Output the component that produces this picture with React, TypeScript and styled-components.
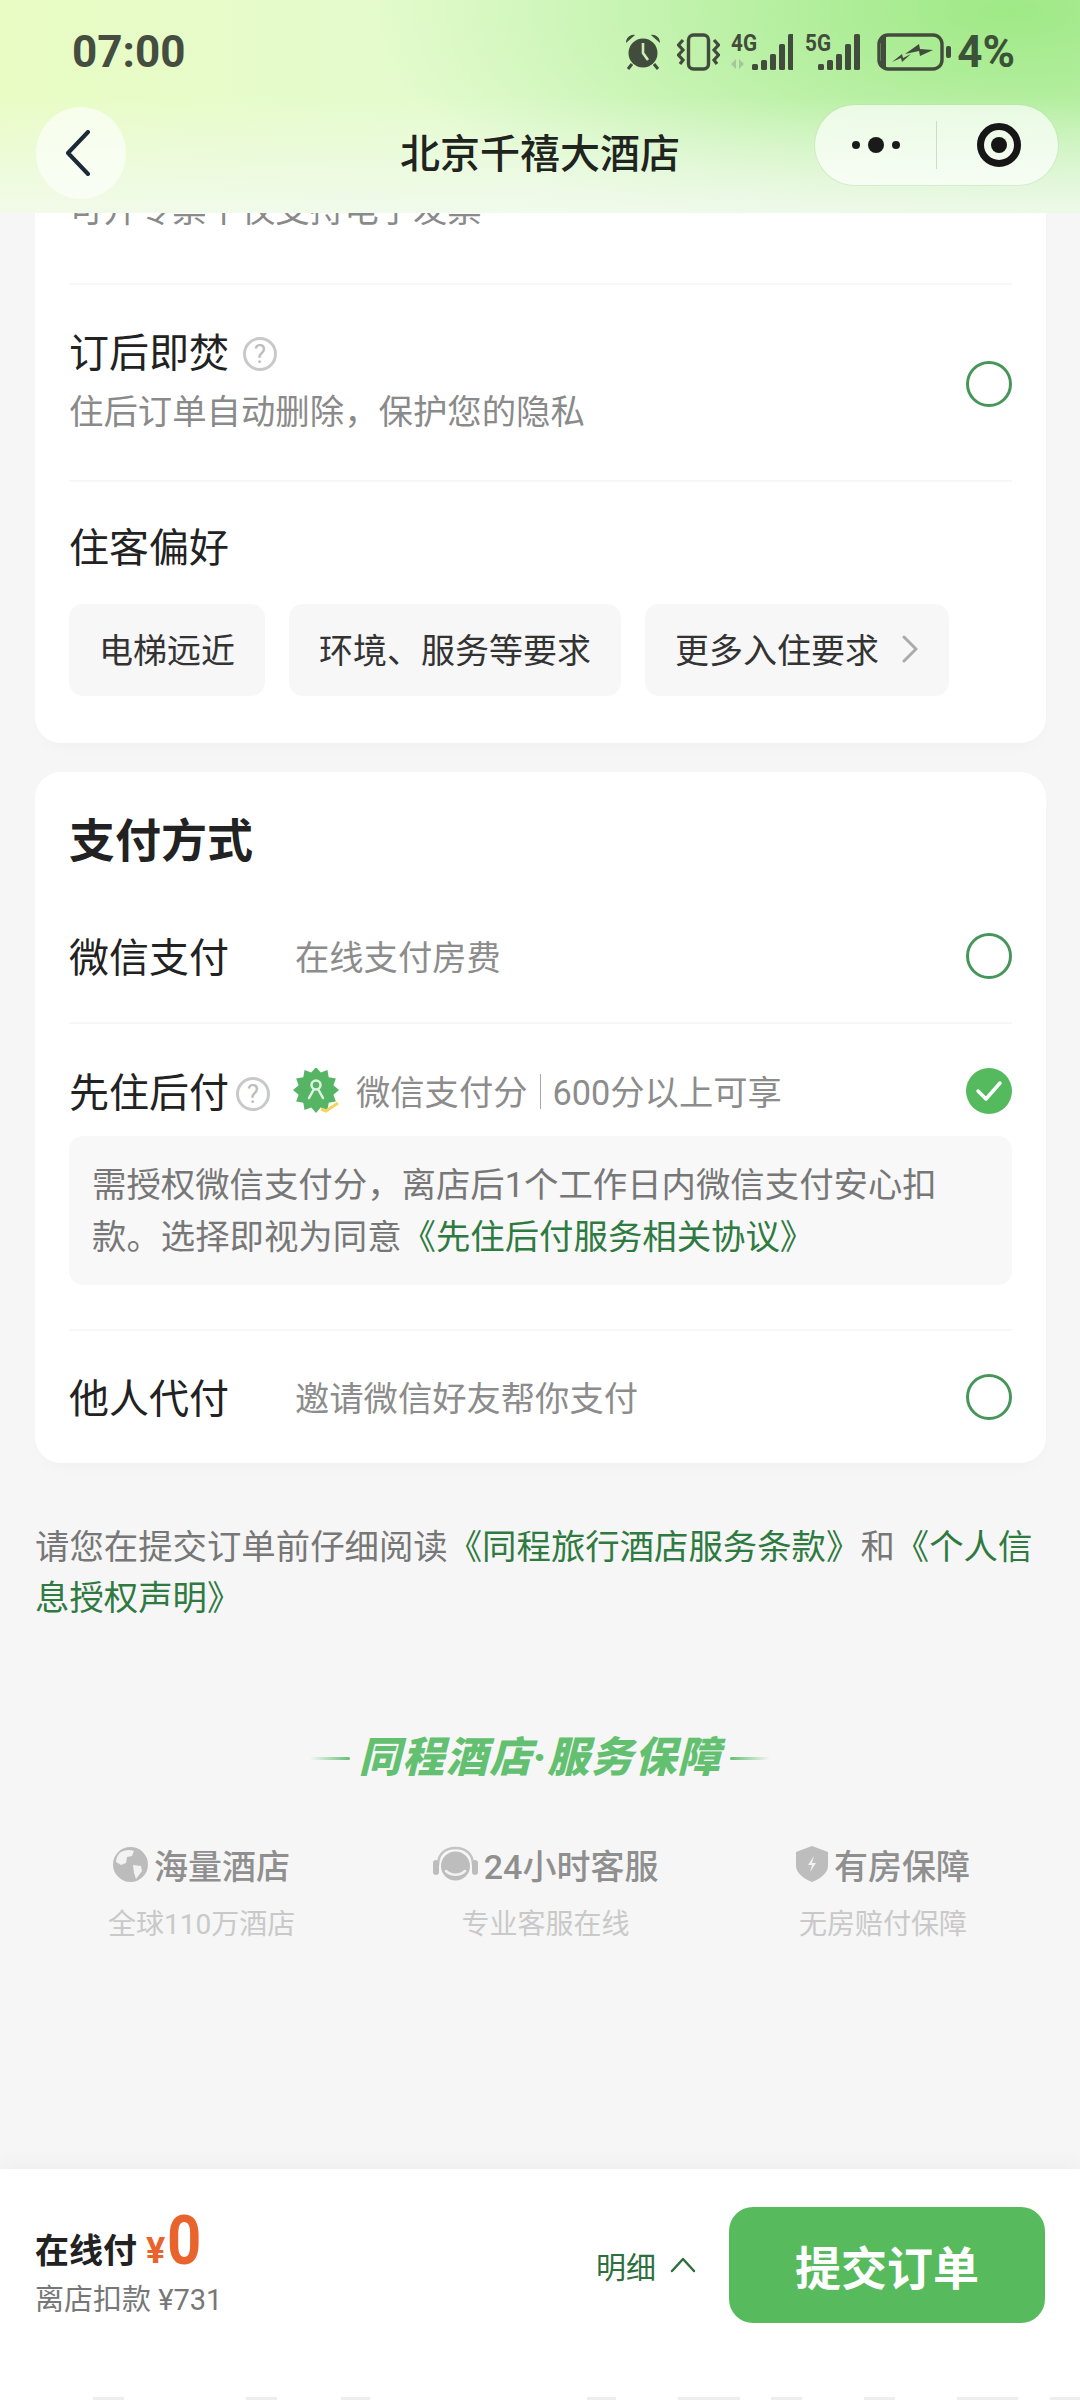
import React, { FC } from "react";
import styled, { createGlobalStyle } from "styled-components";

const GlobalStyle = createGlobalStyle`
    html, body {
        margin: 0;
        padding: 0;
        background: #f6f6f6;
    }
    * {
        box-sizing: border-box;
    }
    body {
        font-family: "Roboto", "Noto Sans CJK SC", sans-serif;
    }
`;

const Page = styled.div`
    width: 1080px;
    height: 2400px;
    display: flex;
    flex-direction: column;
    overflow: hidden;
    background: #f6f6f6;
`;

const Header = styled.header`
    height: 213px;
    flex-shrink: 0;
    position: relative;
    z-index: 2;
    background:
        linear-gradient(180deg, rgba(243, 250, 240, 0) 45%, rgba(243, 250, 240, 0.85) 100%),
        radial-gradient(ellipse 640px 260px at 1010px 10px, #9fe986 0%, rgba(159, 233, 134, 0) 100%),
        linear-gradient(90deg, #e9fcc4 0%, #e3fbd0 50%, #d8f8cc 100%);
`;

const StatusBar = styled.div`
    height: 105px;
    padding: 0 65px 1px 72px;
    display: flex;
    align-items: center;
    justify-content: space-between;
    color: #404c3b;
`;

const Clock = styled.div`
    font-size: 44px;
    font-weight: 700;
    color: #444d3f;
`;

const StatusIcons = styled.div`
    display: flex;
    align-items: center;
`;

const StatusGlyph = styled.svg<{ $ml?: number }>`
    display: block;
    margin-left: ${(p) => p.$ml ?? 0}px;
    flex-shrink: 0;
`;

// taller than the bars so the 4G / 5G label box stays inside the drawing
const SignalGlyph = styled(StatusGlyph)`
    margin-top: -10px;
`;

const Percent = styled.span`
    margin-left: 5px;
    font-size: 44px;
    font-weight: 700;
    line-height: 48px;
    color: #3c5238;
`;

const Nav = styled.div`
    height: 96px;
    padding: 0 22px 0 36px;
    display: grid;
    grid-template-columns: 1fr auto 1fr;
    align-items: start;
`;

const BackButton = styled.div`
    width: 90px;
    height: 92px;
    margin-top: 2px;
    padding-right: 6px;
    border-radius: 50%;
    background: rgba(255, 255, 255, 0.62);
    display: flex;
    align-items: center;
    justify-content: center;
`;

const NavTitle = styled.div`
    padding-top: 2px;
    font-size: 40px;
    font-weight: 500;
    line-height: 96px;
    color: #1f241e;
    transform: translateX(-7px);
`;

const Capsule = styled.div`
    justify-self: end;
    width: 243px;
    height: 80px;
    border-radius: 40px;
    background: rgba(255, 255, 255, 0.68);
    box-shadow: 0 0 0 1px rgba(190, 215, 180, 0.35);
    display: flex;
    align-items: center;
`;

const CapsuleSide = styled.div`
    flex: 1;
    height: 48px;
    display: flex;
    align-items: center;
    justify-content: center;
    & + & {
        border-left: 1px solid rgba(170, 190, 165, 0.5);
    }
`;

const Dot = styled.span<{ $big?: boolean }>`
    width: ${(p) => (p.$big ? 16 : 8)}px;
    height: ${(p) => (p.$big ? 16 : 8)}px;
    margin: 0 4px;
    border-radius: 50%;
    background: #1a1a1a;
`;

const Target = styled.span`
    width: 44px;
    height: 44px;
    margin-left: 2px;
    border: 7px solid #161616;
    border-radius: 50%;
    display: flex;
    align-items: center;
    justify-content: center;
    &::after {
        content: "";
        width: 16px;
        height: 16px;
        border-radius: 50%;
        background: #161616;
    }
`;

const Scroller = styled.main`
    flex: 1;
    min-height: 0;
    overflow: hidden;
`;

const ScrollContent = styled.div`
    margin-top: -36px;
`;

const Card = styled.section`
    margin: 0 34px 0 35px;
    padding: 0 34px;
    background: #fff;
    border-radius: 26px;
    box-shadow: 0 10px 16px -8px rgba(0, 0, 0, 0.03);
    & + & {
        margin-top: 29px;
    }
`;

const Row = styled.div`
    border-bottom: 2px solid #f7f7f7;
    &:last-child {
        border-bottom: none;
    }
`;

const CutRow = styled(Row)`
    height: 108px;
    padding-top: 7px;
    font-size: 34.4px;
    line-height: 52px;
    color: #8a8a8a;
`;

const SwitchRow = styled(Row)`
    height: 197px;
    padding-top: 40px;
    display: flex;
    justify-content: space-between;
`;

const PreferRow = styled(Row)`
    padding: 38px 0 47px;
`;

const PayRow = styled(Row)`
    height: 134px;
    display: flex;
    align-items: center;
    justify-content: space-between;
    &:last-child {
        height: 132px;
    }
`;

const ScoreRow = styled(Row)`
    padding: 44px 0 44px;
`;

const RowTitle = styled.div`
    padding-top: 3px;
    margin-bottom: -3px;
    font-size: 40px;
    line-height: 52px;
    color: #222;
    display: flex;
    align-items: center;
`;

const RowSub = styled.div`
    margin-top: 9px;
    font-size: 34.4px;
    line-height: 52px;
    color: #8a8a8a;
`;

const Radio = styled.span<{ $top?: number }>`
    width: 46px;
    height: 46px;
    flex-shrink: 0;
    margin-top: ${(p) => p.$top ?? 0}px;
    border: 3px solid #46965a;
    border-radius: 50%;
`;

const CheckedRadio = styled.span`
    width: 46px;
    height: 46px;
    flex-shrink: 0;
    border-radius: 50%;
    background: #55b95d;
    display: flex;
    align-items: center;
    justify-content: center;
`;

const Help = styled.span<{ $ml: number }>`
    width: 34px;
    height: 34px;
    flex-shrink: 0;
    margin-left: ${(p) => p.$ml}px;
    border: 3px solid #c9c9c9;
    border-radius: 50%;
    font-size: 26px;
    line-height: 28px;
    text-align: center;
    color: #bcbcbc;
`;

const Chips = styled.div`
    margin-top: 32px;
    display: flex;
    gap: 24px;
`;

const Chip = styled.div`
    height: 92px;
    padding: 0 30px 3px;
    border-radius: 14px;
    background: #f7f7f7;
    font-size: 34px;
    color: #333;
    display: flex;
    align-items: center;
    gap: 22px;
`;

const CardTitle = styled.h2`
    margin: 0;
    padding: 39px 0 19px;
    font-size: 46px;
    font-weight: 700;
    line-height: 60px;
    color: #222;
`;

const PayLabel = styled.div`
    display: flex;
    align-items: center;
`;

const PayName = styled(RowTitle)`
    width: 226px;
`;

const PayHint = styled.span`
    padding-top: 3px;
    font-size: 34.3px;
    line-height: 52px;
    color: #8c8c8c;
`;

const ScoreHead = styled.div`
    height: 46px;
    display: flex;
    align-items: center;
    justify-content: space-between;
`;

const ScoreLabel = styled.div`
    display: flex;
    align-items: center;
`;

const ScoreBadge = styled.svg`
    display: block;
    margin: 0 15px 0 23px;
`;

const ScorePipe = styled.span`
    width: 1px;
    height: 35px;
    margin: 0 12px;
    background: #a8a8a8;
`;

const NoteBox = styled.div`
    margin-top: 22px;
    padding: 23px 23px 22px;
    border-radius: 14px;
    background: #f8f8f8;
    font-size: 34.4px;
    line-height: 52px;
    color: #777;
`;

const GreenLink = styled.span`
    color: #2f7a40;
`;

const Terms = styled.p`
    margin: 59px 35px 0;
    font-size: 34.4px;
    line-height: 51px;
    color: #777;
`;

const Promise = styled.div`
    margin-top: 104px;
    display: flex;
    align-items: center;
    justify-content: center;
    gap: 9px;
`;

const PromiseLine = styled.span<{ $flip?: boolean }>`
    width: 40px;
    height: 3px;
    border-radius: 2px;
    background: linear-gradient(${(p) => (p.$flip ? "270deg" : "90deg")}, rgba(98, 192, 112, 0), #62c070);
`;

const PromiseTitle = styled.div`
    font-size: 42px;
    font-weight: 900;
    font-style: italic;
    line-height: 60px;
    letter-spacing: 1.5px;
    color: #62c070;
`;

const Perks = styled.div`
    margin-top: 54px;
    padding: 0 110px 0 108px;
    display: flex;
    justify-content: space-between;
`;

const Perk = styled.div`
    display: flex;
    flex-direction: column;
    align-items: center;
`;

const PerkHead = styled.div`
    height: 44px;
    display: flex;
    align-items: center;
    gap: 6px;
    font-size: 34px;
    font-weight: 500;
    color: #8f8f8f;
`;

const PerkSub = styled.div`
    margin-top: 19px;
    font-size: 28px;
    line-height: 40px;
    color: #c9c9c9;
`;

const Footer = styled.footer`
    height: 231px;
    flex-shrink: 0;
    position: relative;
    z-index: 1;
    padding: 38px 35px 0;
    background: #fff;
    box-shadow: 0 -6px 18px rgba(0, 0, 0, 0.035);
    display: flex;
    align-items: flex-start;
`;

const PriceBlock = styled.div`
    flex: 1;
`;

const PriceLine = styled.div`
    height: 66px;
    display: flex;
    align-items: flex-end;
    color: #222;
    font-size: 34px;
    font-weight: 700;
    line-height: 44px;
`;

const Yen = styled.span`
    margin: 0 2px 0 9px;
    font-size: 36px;
    line-height: 44px;
    color: #e8642c;
`;

const Amount = styled.span`
    display: inline-block;
    margin-bottom: -1px;
    font-size: 68px;
    line-height: 66px;
    color: #e8642c;
    transform: scaleX(0.88);
    transform-origin: left center;
`;

const PriceSub = styled.div`
    margin-top: 7px;
    font-size: 29px;
    line-height: 40px;
    color: #777;
`;

const Detail = styled.div`
    height: 116px;
    margin-right: 33px;
    display: flex;
    align-items: center;
    gap: 14px;
    font-size: 30px;
    color: #2f6f3d;
`;

const SubmitButton = styled.button`
    width: 316px;
    height: 116px;
    border: none;
    border-radius: 24px;
    background: #57bb5e;
    color: #fff;
    font-family: inherit;
    font-size: 46px;
    font-weight: 700;
`;

const ClippedMarks = styled.svg`
    position: absolute;
    left: 0;
    bottom: 0;
    display: block;
`;

// 12 pointed badge behind the WeChat score icon
const badgePoints = Array.from({ length: 24 }, (_, i) => {
    const r = i % 2 === 0 ? 23 : 18;
    const a = (i * Math.PI) / 12 - Math.PI / 2;
    return `${(23 + r * Math.cos(a)).toFixed(1)},${(22 + r * Math.sin(a)).toFixed(1)}`;
}).join(" ");

const marks: [number, number][] = [
    [93, 31], [246, 31], [341, 29], [587, 29], [678, 62], [771, 31], [864, 31], [957, 61], [1050, 30],
];

const ink = "#424c3d";

const AlarmIcon = () => (
    <StatusGlyph width="38" height="38" viewBox="0 0 38 38">
        <circle cx="19" cy="20" r="14.5" fill={ink} />
        <path d="M19 10v10l5 7" fill="none" stroke="#cdeeb8" strokeWidth="2.6" />
        <path d="M2 10c0-5 4-9 9-8zM36 10c0-5-4-9-9-8z" fill={ink} />
        <path d="M8 31l-4 5M30 31l4 5" stroke={ink} strokeWidth="3" />
    </StatusGlyph>
);

const VibrateIcon = () => (
    <StatusGlyph $ml={15} width="43" height="38" viewBox="0 0 43 38">
        <rect x="11.5" y="2" width="20" height="34" rx="5" fill="none" stroke={ink} strokeWidth="3.4" />
        <path d="M6 7L1.5 12 6 17 1.5 22 6 27 3 31M37 7l4.500 5L37 17l4.500 5L37 27l3 4" fill="none" stroke={ink} strokeWidth="3.2" />
    </StatusGlyph>
);

const barTops = [30, 26, 20, 10, 0];

const SignalIcon: FC<{ label: string; barStart: number; width: number; ml: number; arrows?: boolean }> = ({
    label,
    barStart,
    width,
    ml,
    arrows,
}) => (
    <SignalGlyph $ml={ml} width={width} height="48" viewBox={`0 -10 ${width} 48`}>
        <text x="0" y="18" fontSize="24" fontWeight="700" fontFamily="Roboto" textLength="26" lengthAdjust="spacingAndGlyphs" fill={ink}>
            {label}
        </text>
        {arrows && <path d="M0 31l5-5v10zM8 36v-10l5 5z" fill="#a9c5a0" />}
        {barTops.map((top, i) => (
            <rect key={i} x={barStart + i * 9} y={top + 1} width="6" height={36 - top} rx="1.500" fill={ink} />
        ))}
    </SignalGlyph>
);

const BatteryIcon = () => (
    <StatusGlyph $ml={16} width="75" height="38" viewBox="0 0 75 38">
        <rect x="2" y="2" width="63" height="34" rx="9" fill="none" stroke={ink} strokeWidth="3.4" />
        <path d="M6.500 4v30" stroke={ink} strokeWidth="5" />
        <rect x="69" y="13" width="5" height="12" rx="2" fill={ink} />
        <path d="M15 29l10-8 1 4 8-4-9 8-1-4zM28 21l14-10 1 5 13 1-13 6-1-5z" fill={ink} />
    </StatusGlyph>
);

const Chevron: FC<{ size: number; stroke: string; width: number; d: string; viewBox: string; height: number }> = ({
    stroke,
    width,
    d,
    viewBox,
    size,
    height,
}) => (
    <svg width={size} height={height} viewBox={viewBox} style={{ display: "block" }}>
        <path d={d} fill="none" stroke={stroke} strokeWidth={width} strokeLinecap="round" strokeLinejoin="round" />
    </svg>
);

const ScoreIcon = () => (
    <ScoreBadge width="48" height="46" viewBox="0 0 48 46">
        <polygon points={badgePoints} fill="#55b565" />
        <circle cx="23" cy="17" r="4.500" fill="none" stroke="#dff3e0" strokeWidth="2.500" />
        <path d="M21 21l-5 9M25 21l5 9" stroke="#dff3e0" strokeWidth="2.500" strokeLinecap="round" />
        <path d="M28 41l5 2 12-8" fill="none" stroke="#f2d65c" strokeWidth="3" />
    </ScoreBadge>
);

const GlobeIcon = () => (
    <svg width="35" height="35" viewBox="0 0 35 35" style={{ display: "block" }}>
        <circle cx="17.500" cy="17.500" r="17.500" fill="#bcbcbc" />
        <path d="M8 5c4-2 9-3 13-1l-2 5-5 1-1 6-5 2-5-3c0-4 2-8 5-10zM20 18l8 1 1 5-6 8-2-6z" fill="#f2f2f2" />
    </svg>
);

const HeadsetIcon = () => (
    <svg width="45" height="36" viewBox="0 0 45 36" style={{ display: "block" }}>
        <path d="M5 19C5 8 12 2 22.500 2S40 8 40 19" fill="none" stroke="#c4c4c4" strokeWidth="2.500" />
        <rect x="0" y="14" width="6" height="15" rx="3" fill="#bdbdbd" />
        <rect x="39" y="14" width="6" height="15" rx="3" fill="#bdbdbd" />
        <circle cx="22.500" cy="20" r="14.500" fill="#bdbdbd" />
        <path d="M13 25c5 5 14 5 19 0" fill="none" stroke="#f2f2f2" strokeWidth="2.500" strokeLinecap="round" />
    </svg>
);

const ShieldIcon = () => (
    <svg width="32" height="36" viewBox="0 0 32 36" style={{ display: "block" }}>
        <path d="M16 0l16 6v14c0 7-8 13-16 16C8 33 0 27 0 20V6z" fill="#bdbdbd" />
        <path d="M18 10l-6 9h4l-2 7 6-9h-4z" fill="#f2f2f2" />
    </svg>
);

const App: FC = () => {
    return (
        <Page lang="zh-CN">
            <GlobalStyle />
            <Header>
                <StatusBar>
                    <Clock>07:00</Clock>
                    <StatusIcons>
                        <AlarmIcon />
                        <VibrateIcon />
                        <SignalIcon label="4G" barStart={21} width={62} ml={11} arrows />
                        <SignalIcon label="5G" barStart={13} width={56} ml={12} />
                        <BatteryIcon />
                        <Percent>4%</Percent>
                    </StatusIcons>
                </StatusBar>
                <Nav>
                    <BackButton>
                        <Chevron size={26} height={46} viewBox="0 0 26 46" stroke="#1c2a38" width={4} d="M23 2L3 23l20 21" />
                    </BackButton>
                    <NavTitle>北京千禧大酒店</NavTitle>
                    <Capsule>
                        <CapsuleSide>
                            <Dot />
                            <Dot $big />
                            <Dot />
                        </CapsuleSide>
                        <CapsuleSide>
                            <Target />
                        </CapsuleSide>
                    </Capsule>
                </Nav>
            </Header>

            <Scroller>
                <ScrollContent>
                    <Card>
                        <CutRow>可开专票丨仅支持电子发票</CutRow>
                        <SwitchRow>
                            <div>
                                <RowTitle>
                                    订后即焚
                                    <Help $ml={14}>?</Help>
                                </RowTitle>
                                <RowSub>住后订单自动删除，保护您的隐私</RowSub>
                            </div>
                            <Radio $top={36} />
                        </SwitchRow>
                        <PreferRow>
                            <RowTitle>住客偏好</RowTitle>
                            <Chips>
                                <Chip>电梯远近</Chip>
                                <Chip>环境、服务等要求</Chip>
                                <Chip>
                                    更多入住要求
                                    <Chevron size={18} height={28} viewBox="0 0 18 28" stroke="#ababab" width={3} d="M3 2l12 12L3 26" />
                                </Chip>
                            </Chips>
                        </PreferRow>
                    </Card>

                    <Card>
                        <CardTitle>支付方式</CardTitle>
                        <PayRow>
                            <PayLabel>
                                <PayName>微信支付</PayName>
                                <PayHint>在线支付房费</PayHint>
                            </PayLabel>
                            <Radio />
                        </PayRow>
                        <ScoreRow>
                            <ScoreHead>
                                <ScoreLabel>
                                    <RowTitle>
                                        先住后付
                                        <Help $ml={7}>?</Help>
                                    </RowTitle>
                                    <ScoreIcon />
                                    <PayHint>微信支付分</PayHint>
                                    <ScorePipe />
                                    <PayHint>600分以上可享</PayHint>
                                </ScoreLabel>
                                <CheckedRadio>
                                    <Chevron size={28} height={22} viewBox="0 0 28 22" stroke="#fff" width={3.500} d="M3 11l8 8L25 3" />
                                </CheckedRadio>
                            </ScoreHead>
                            <NoteBox>
                                需授权微信支付分，离店后1个工作日内微信支付安心扣款。选择即视为同意
                                <GreenLink>《先住后付服务相关协议》</GreenLink>
                            </NoteBox>
                        </ScoreRow>
                        <PayRow>
                            <PayLabel>
                                <PayName>他人代付</PayName>
                                <PayHint>邀请微信好友帮你支付</PayHint>
                            </PayLabel>
                            <Radio />
                        </PayRow>
                    </Card>

                    <Terms>
                        请您在提交订单前仔细阅读
                        <GreenLink>《同程旅行酒店服务条款》</GreenLink>和<GreenLink>《个人信息授权声明》</GreenLink>
                    </Terms>

                    <Promise>
                        <PromiseLine />
                        <PromiseTitle>同程酒店·服务保障</PromiseTitle>
                        <PromiseLine $flip />
                    </Promise>

                    <Perks>
                        <Perk>
                            <PerkHead>
                                <GlobeIcon />
                                海量酒店
                            </PerkHead>
                            <PerkSub>全球110万酒店</PerkSub>
                        </Perk>
                        <Perk>
                            <PerkHead>
                                <HeadsetIcon />
                                24小时客服
                            </PerkHead>
                            <PerkSub>专业客服在线</PerkSub>
                        </Perk>
                        <Perk>
                            <PerkHead>
                                <ShieldIcon />
                                有房保障
                            </PerkHead>
                            <PerkSub>无房赔付保障</PerkSub>
                        </Perk>
                    </Perks>
                </ScrollContent>
            </Scroller>

            <Footer>
                <PriceBlock>
                    <PriceLine>
                        在线付
                        <Yen>¥</Yen>
                        <Amount>0</Amount>
                    </PriceLine>
                    <PriceSub>离店扣款 ¥731</PriceSub>
                </PriceBlock>
                <Detail>
                    明细
                    <Chevron size={26} height={16} viewBox="0 0 26 16" stroke="#2f6f3d" width={2.500} d="M2 14L13 2l11 12" />
                </Detail>
                <SubmitButton>提交订单</SubmitButton>
                <ClippedMarks width="1080" height="3" viewBox="0 0 1080 3">
                    {marks.map(([x, w]) => (
                        <rect key={x} x={x} y="0" width={w} height="3" fill="#eeeeee" />
                    ))}
                </ClippedMarks>
            </Footer>
        </Page>
    );
};

export default App;
